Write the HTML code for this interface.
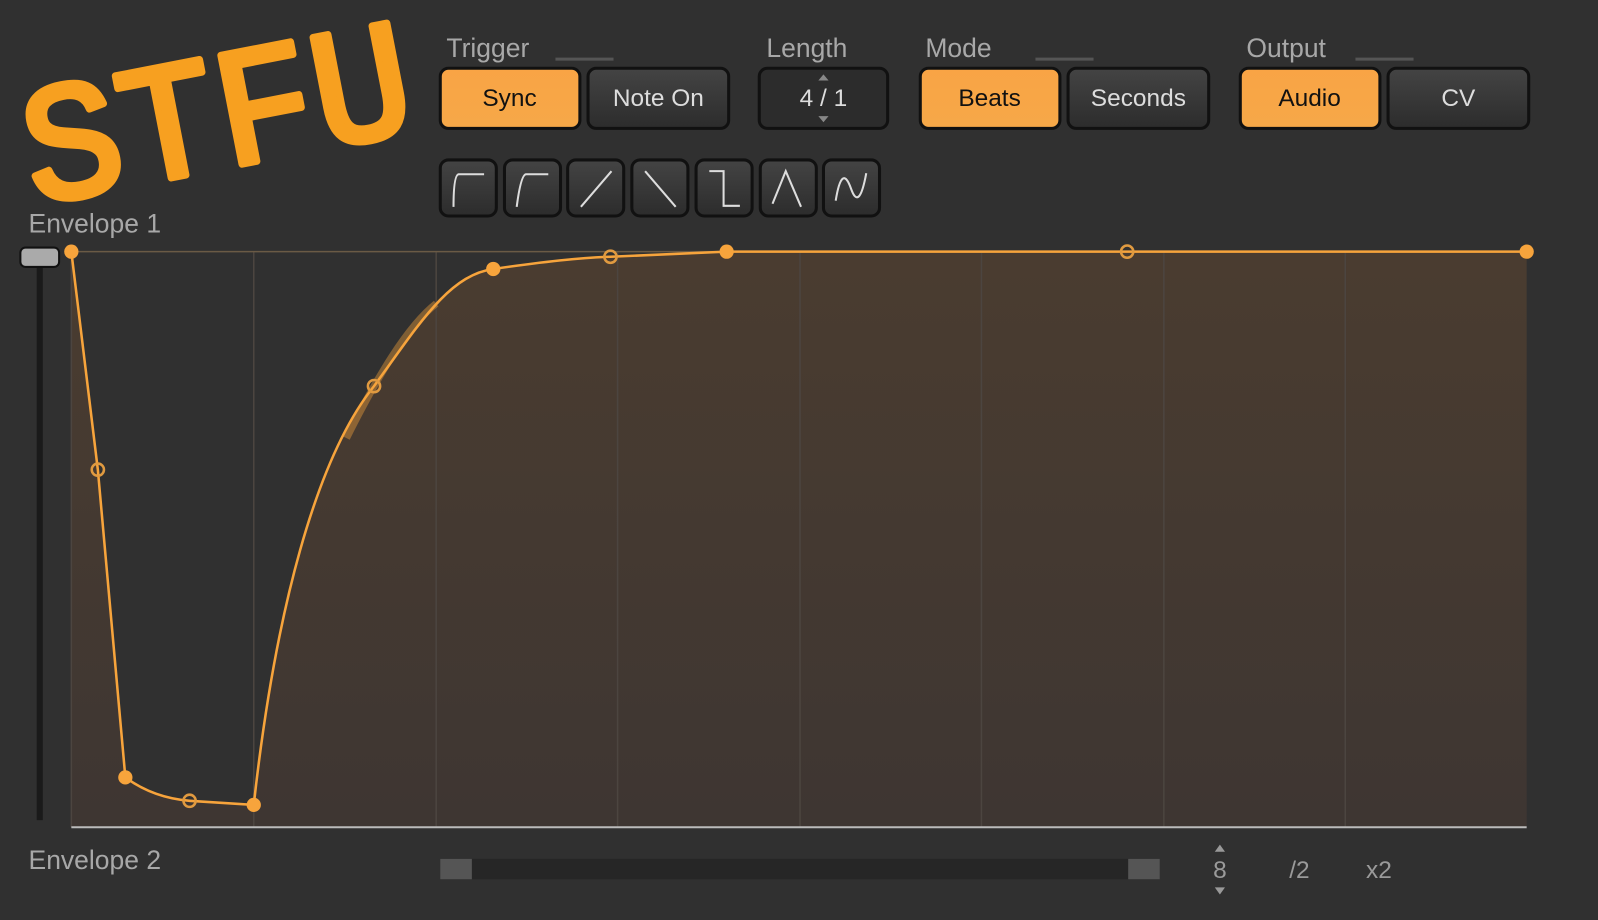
<!DOCTYPE html>
<html><head><meta charset="utf-8"><style>
html,body{margin:0;padding:0;background:#303030;overflow:hidden}
svg{display:block}
text{font-family:"Liberation Sans",sans-serif}
text.logo{font-family:"Liberation Mono","Courier New",monospace;font-weight:normal}
</style></head><body>
<svg width="1598" height="920" viewBox="0 0 1568 903" preserveAspectRatio="none">
<defs>
<linearGradient id="og" x1="0" y1="0" x2="0" y2="1"><stop offset="0" stop-color="#f9a445"/><stop offset="1" stop-color="#f6a848"/></linearGradient>
<linearGradient id="dg" x1="0" y1="0" x2="0" y2="1"><stop offset="0" stop-color="#444"/><stop offset="1" stop-color="#2c2c2c"/></linearGradient>
<linearGradient id="fg" x1="0" y1="0" x2="0" y2="1"><stop offset="0" stop-color="#4a3c30"/><stop offset="1" stop-color="#3e3632"/></linearGradient>
</defs>
<rect width="1568" height="903" fill="#303030"/>
<!-- logo -->
<text class="logo" x="212" y="165" text-anchor="middle" transform="rotate(-11 212 110)" font-size="165" fill="#f7a020" stroke="#f7a020" stroke-width="7" stroke-linejoin="round" textLength="385" lengthAdjust="spacingAndGlyphs">STFU</text>
<!-- labels -->
<g fill="#a8a8a8" font-size="26">
<text x="438" y="56">Trigger</text>
<text x="752" y="56">Length</text>
<text x="908" y="56">Mode</text>
<text x="1223" y="56">Output</text>
<text x="28" y="228">Envelope 1</text>
<text x="28" y="853">Envelope 2</text>
</g>
<g stroke="#555" stroke-width="3"><line x1="545" y1="58" x2="602" y2="58"/><line x1="1016" y1="58" x2="1073" y2="58"/><line x1="1330" y1="58" x2="1387" y2="58"/></g>
<!-- buttons -->
<g stroke="#111" stroke-width="3">
<rect x="432" y="67" width="137" height="59" rx="8" fill="url(#og)"/>
<rect x="577" y="67" width="138" height="59" rx="8" fill="url(#dg)"/>
<rect x="745" y="67" width="126" height="59" rx="8" fill="#2c2c2c"/>
<rect x="903" y="67" width="137" height="59" rx="8" fill="url(#og)"/>
<rect x="1048" y="67" width="138" height="59" rx="8" fill="url(#dg)"/>
<rect x="1217" y="67" width="137" height="59" rx="8" fill="url(#og)"/>
<rect x="1362" y="67" width="138" height="59" rx="8" fill="url(#dg)"/>
</g>
<g font-size="24" text-anchor="middle">
<text x="500" y="104" fill="#111">Sync</text>
<text x="646" y="104" fill="#ddd">Note On</text>
<text x="808" y="104" fill="#ddd">4 / 1</text>
<text x="971" y="104" fill="#111">Beats</text>
<text x="1117" y="104" fill="#ddd">Seconds</text>
<text x="1285" y="104" fill="#111">Audio</text>
<text x="1431" y="104" fill="#ddd">CV</text>
</g>
<path d="M803,79 L813,79 L808,73Z M803,114 L813,114 L808,120Z" fill="#888"/>
<!-- shape buttons -->
<g stroke="#111" stroke-width="3" fill="url(#dg)">
<rect x="432" y="157" width="55" height="55" rx="8"/><rect x="495" y="157" width="55" height="55" rx="8"/>
<rect x="557" y="157" width="55" height="55" rx="8"/><rect x="620" y="157" width="55" height="55" rx="8"/>
<rect x="683" y="157" width="55" height="55" rx="8"/><rect x="746" y="157" width="55" height="55" rx="8"/>
<rect x="808" y="157" width="55" height="55" rx="8"/>
</g>
<g stroke="#ddd" stroke-width="2" fill="none">
<path d="M445,203 Q445,172 450,171 L475,171"/>
<path d="M507,203 Q511,172 516,171 L538,171"/>
<path d="M570,203 L600,168"/>
<path d="M633,168 L663,203"/>
<path d="M696,168 L710,168 L710,202 L726,202"/>
<path d="M758,200 L771,168 L786,203"/>
<path d="M820,197 Q826,160 835,185 Q843,208 850,170"/>
</g>
<!-- slider -->
<rect x="36" y="255" width="6" height="550" fill="#1a1a1a"/>
<rect x="20" y="243" width="38" height="19" rx="5" fill="#aaa" stroke="#111" stroke-width="2"/>
<!-- graph -->
<rect x="70" y="247" width="1428" height="565" fill="url(#fg)"/>
<path d="M70,247 L96,461 L123,763 Q150,783 186,786 L249,790 C270,600 310,450 367,379 C410,320 440,270 484,264 Q560,253 599,252 L713,247 L70,247Z" fill="#303030"/>
<g stroke="#4c4540" stroke-width="1.5">
<line x1="249" y1="247" x2="249" y2="812"/><line x1="428" y1="247" x2="428" y2="812"/><line x1="606" y1="247" x2="606" y2="812"/><line x1="785" y1="247" x2="785" y2="812"/><line x1="963" y1="247" x2="963" y2="812"/><line x1="1142" y1="247" x2="1142" y2="812"/><line x1="1320" y1="247" x2="1320" y2="812"/>
<line x1="70" y1="247" x2="70" y2="812"/>
</g>
<line x1="70" y1="247" x2="1498" y2="247" stroke="#6a5a45" stroke-width="1.5"/>
<line x1="70" y1="812" x2="1498" y2="812" stroke="#bbb" stroke-width="2"/>
<path d="M340,430 C370,370 400,320 428,298" fill="none" stroke="#f7a43c" stroke-opacity="0.4" stroke-width="7"/>
<path d="M70,247 L96,461 L123,763 Q150,783 186,786 L249,790 C270,600 310,450 367,379 C410,320 440,270 484,264 Q560,253 599,252 L713,247 L1498,247" fill="none" stroke="#f7a43c" stroke-width="2.5"/>
<g fill="#f7a43c"><circle cx="70" cy="247" r="7"/><circle cx="123" cy="763" r="7"/><circle cx="249" cy="790" r="7"/><circle cx="484" cy="264" r="7"/><circle cx="713" cy="247" r="7"/><circle cx="1498" cy="247" r="7"/></g>
<g fill="none" stroke="#e09a40" stroke-width="2.5"><circle cx="96" cy="461" r="6"/><circle cx="186" cy="786" r="6"/><circle cx="367" cy="379" r="6"/><circle cx="599" cy="252" r="6"/><circle cx="1106" cy="247" r="6"/></g>
<!-- bottom -->
<rect x="432" y="843" width="706" height="20" fill="#262626"/>
<rect x="432" y="843" width="31" height="20" fill="#555"/>
<rect x="1107" y="843" width="31" height="20" fill="#555"/>
<g fill="#9a9a9a" font-size="24" text-anchor="middle">
<text x="1197" y="862">8</text><text x="1275" y="862">/2</text><text x="1353" y="862">x2</text>
</g>
<path d="M1192,836 L1202,836 L1197,829Z M1192,871 L1202,871 L1197,878Z" fill="#999"/>
</svg>
</body></html>
